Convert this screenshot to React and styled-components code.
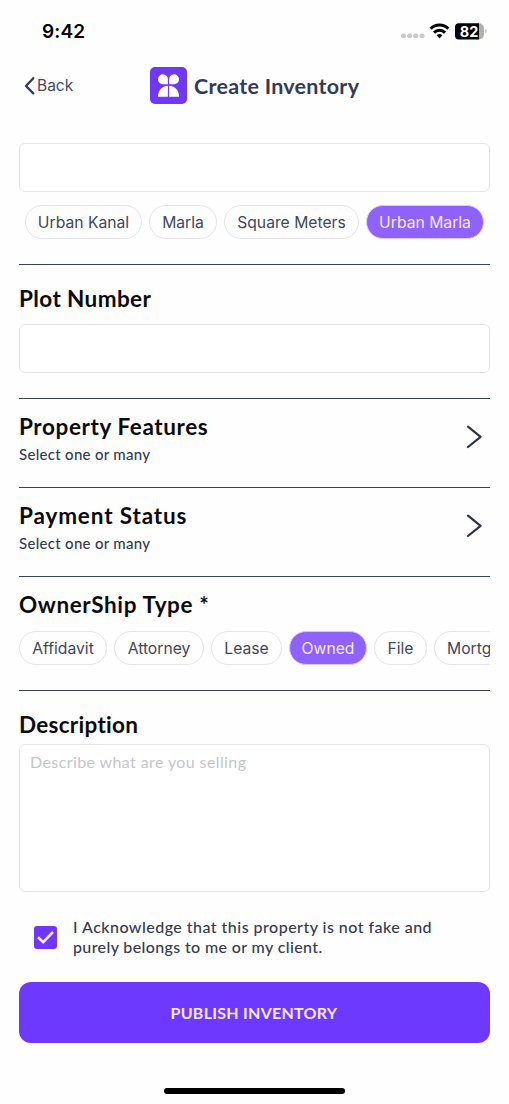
import React from "react";
import styled, { createGlobalStyle } from "styled-components";

const GlobalStyle = createGlobalStyle`
  * {
    box-sizing: border-box;
  }

  body {
    margin: 0;
    background: #fefefe;
    font-family: Lato, "Open Sans", sans-serif;
    color: #343b50;
  }
`;

const Screen = styled.div`
  display: flex;
  flex-direction: column;
  width: 509px;
  height: 1104px;
  overflow: hidden;
`;

const StatusBar = styled.div`
  display: flex;
  align-items: center;
  justify-content: space-between;
  height: 61px;
  padding: 0 21px 0 42px;
`;

const Clock = styled.div`
  padding-top: 2px;
  font: 600 19px/24px Inter, sans-serif;
  letter-spacing: 0.1px;
  color: #000;
`;

const StatusIcons = styled.div`
  display: flex;
  align-items: center;
`;

const Header = styled.header`
  display: flex;
  align-items: center;
  height: 49px;
  padding-left: 24px;
`;

const Back = styled.button`
  display: flex;
  align-items: center;
  gap: 2px;
  width: 126px;
  padding: 0;
  border: 0;
  background: none;
  font: 400 15.5px/20px Inter, sans-serif;
  color: #454b5e;
`;

const Title = styled.h1`
  margin: 0 0 0 7px;
  font-size: 21.5px;
  font-weight: 700;
  line-height: 28px;
  letter-spacing: 0.27px;
`;

const Form = styled.main`
  display: flex;
  flex-direction: column;
  padding: 33px 19px 0;
`;

const Section = styled.section`
  height: ${props => props.$height}px;
  padding-top: ${props => props.$top || 0}px;
  border-bottom: ${props => (props.$last ? "0" : "1px solid #3c4256")};
`;

const Input = styled.input`
  display: block;
  width: 471px;
  height: 49px;
  border: 1px solid #e5e4ed;
  border-radius: 6px;
  background: #fff;
`;

const Heading = styled.h2`
  margin: 0 0 ${props => props.$gap || 0}px;
  font-size: 22.5px;
  font-weight: 700;
  line-height: 28px;
  letter-spacing: ${props => props.$spacing}px;
  color: #0b0b0d;
  white-space: nowrap;
`;

const Hint = styled.div`
  margin-top: 3px;
  font-size: 15px;
  font-weight: 500;
  line-height: 20px;
  letter-spacing: 0.3px;
`;

const LinkRow = styled.div`
  display: flex;
  align-items: flex-start;
  justify-content: space-between;
  padding-right: 7px;
`;

const Chips = styled.div`
  display: flex;
  gap: 7px;
  overflow: hidden;
  margin-top: ${props => props.$top}px;
  padding-left: ${props => props.$inset || 0}px;
`;

const Chip = styled.button`
  flex: none;
  width: ${props => props.$width}px;
  height: 34px;
  padding: 1px 0 0 ${props => (props.$clipped ? "12px" : "0")};
  border: 1px solid ${props => (props.$active ? "#d9c9fd" : "#e6e5ed")};
  border-radius: 17px;
  background: ${props => (props.$active ? "#8f62fc" : "#fefefe")};
  font: 400 15.7px/31px Inter, sans-serif;
  text-align: ${props => (props.$clipped ? "left" : "center")};
  white-space: nowrap;
  color: ${props => (props.$active ? "#f6e9ff" : "#414759")};
`;

const TextArea = styled.textarea`
  display: block;
  width: 471px;
  height: 148px;
  padding: 7px 10px;
  border: 1px solid #e5e4ed;
  border-radius: 6px;
  background: #fff;
  resize: none;
  font: 400 16px/20px Lato, sans-serif;
  letter-spacing: 0.4px;

  &::placeholder {
    color: #c5c5c9;
  }
`;

const Agreement = styled.label`
  display: flex;
  align-items: center;
  gap: 16px;
  height: 40px;
  margin-top: 25px;
  padding-left: 15px;
  font-size: 16px;
  font-weight: 500;
  line-height: 20px;
  letter-spacing: 0.47px;
  white-space: nowrap;
`;

const SecondLine = styled.span`
  letter-spacing: 0.37px;
`;

const Checkbox = styled.span`
  display: flex;
  align-items: center;
  justify-content: center;
  width: 23px;
  height: 23px;
  border-radius: 3px;
  background: #6f38f8;
`;

const Publish = styled.button`
  height: 61px;
  margin-top: 25px;
  padding: 0 1px 0 0;
  border: 0;
  border-radius: 12px;
  background: #6e39ff;
  font: 700 16px/20px Lato, sans-serif;
  letter-spacing: 0.27px;
  color: #f5e6ff;
`;

const HomeIndicator = styled.div`
  flex: none;
  align-self: center;
  width: 181px;
  height: 6px;
  margin-top: 45px;
  border-radius: 3px;
  background: #000;
`;

const StatusGlyphs = () => (
  <svg width="88" height="20" viewBox="0 0 88 20">
    <g fill="#c8c8c8">
      <rect x="1" y="12.5" width="4.8" height="4.6" rx="1.8" />
      <rect x="7.2" y="12.5" width="4.8" height="4.6" rx="1.8" />
      <rect x="13.4" y="12.5" width="4.8" height="4.6" rx="1.8" />
      <rect x="19.6" y="12.5" width="4.8" height="4.6" rx="1.8" />
    </g>
    <g fill="none" stroke="#000" strokeWidth="3">
      <path d="M30.7 7.7a12.6 12.6 0 0 1 17.6 0" />
      <path d="M34 11.6a7.9 7.9 0 0 1 11 0" />
    </g>
    <path d="M36.6 14.2a4.6 4.6 0 0 1 5.8 0l-2.9 3.2z" fill="#000" />
    <path d="M78 2.2h1a5 5 0 0 1 5 5v6.2a5 5 0 0 1-5 5h-1z" fill="#b0b0b0" />
    <path d="M85.4 8c1.7.8 1.7 3.7 0 4.5z" fill="#b0b0b0" />
    <path d="M59 2.2h20v16.2H59a4 4 0 0 1-4-4V6.2a4 4 0 0 1 4-4z" fill="#000" />
    <text
      x="69"
      y="15.5"
      fill="#fff"
      fontFamily="Inter, sans-serif"
      fontSize="14.5"
      fontWeight="700"
      textAnchor="middle"
    >
      82
    </text>
  </svg>
);

const BackArrow = () => (
  <svg width="11" height="20" viewBox="0 0 11 20">
    <path
      d="M9.3 2.2 2 10l7.3 7.4"
      fill="none"
      stroke="#343b50"
      strokeWidth="2.3"
      strokeLinecap="round"
      strokeLinejoin="round"
    />
  </svg>
);

const Logo = () => (
  <svg width="37" height="37" viewBox="0 0 37 37">
    <rect width="37" height="37" rx="5" fill="#6f38f8" />
    <g fill="#fff">
      <path d="M17.9 12.3v4.9h-5a4.95 4.95 0 1 1 5-4.9z" />
      <path d="M19.1 12.3v4.9h5a4.95 4.95 0 1 0-5-4.9z" />
      <path d="M17.9 18.8v11H8c0-6.4 3.7-10.6 9.9-11z" />
      <path d="M19.1 18.8c6.2.4 9.9 4.6 9.9 11h-9.9z" />
    </g>
  </svg>
);

const Chevron = styled(({ className }) => (
  <svg className={className} width="18" height="26" viewBox="0 0 18 26">
    <path
      d="m3 2.7 12.6 10.1L3 23"
      fill="none"
      stroke="#2c3346"
      strokeWidth="2.2"
      strokeLinecap="round"
      strokeLinejoin="round"
    />
  </svg>
))`
  margin-top: 11px;
`;

const units = [
  { label: "Urban Kanal", width: 117 },
  { label: "Marla", width: 68 },
  { label: "Square Meters", width: 135 },
  { label: "Urban Marla", width: 118, active: true }
];

const owners = [
  { label: "Affidavit", width: 88 },
  { label: "Attorney", width: 90 },
  { label: "Lease", width: 71 },
  { label: "Owned", width: 78, active: true },
  { label: "File", width: 53 },
  { label: "Mortg", width: 70, clipped: true }
];

const ChipList = ({ items, top, inset }) => (
  <Chips $top={top} $inset={inset}>
    {items.map(item => (
      <Chip
        key={item.label}
        $width={item.width}
        $active={item.active}
        $clipped={item.clipped}
      >
        {item.label}
      </Chip>
    ))}
  </Chips>
);

const LinkSection = ({ title, spacing }) => (
  <Section $height={89} $top={14}>
    <LinkRow>
      <div>
        <Heading $spacing={spacing}>{title}</Heading>
        <Hint>Select one or many</Hint>
      </div>
      <Chevron />
    </LinkRow>
  </Section>
);

class App extends React.Component {
  render() {
    return (
      <Screen>
        <GlobalStyle />
        <StatusBar>
          <Clock>9:42</Clock>
          <StatusIcons>
            <StatusGlyphs />
          </StatusIcons>
        </StatusBar>
        <Header>
          <Back>
            <BackArrow />
            Back
          </Back>
          <Logo />
          <Title>Create Inventory</Title>
        </Header>
        <Form>
          <Section $height={122}>
            <Input />
            <ChipList items={units} top={13} inset={6} />
          </Section>
          <Section $height={134} $top={20}>
            <Heading $spacing={0.4} $gap={11}>
              Plot Number
            </Heading>
            <Input />
          </Section>
          <LinkSection title="Property Features" spacing={0.6} />
          <LinkSection title="Payment Status" spacing={0.87} />
          <Section $height={114} $top={14}>
            <Heading $spacing={0.6}>OwnerShip Type *</Heading>
            <ChipList items={owners} top={12} />
          </Section>
          <Section $height={201} $top={20} $last>
            <Heading $spacing={0.28} $gap={5}>
              Description
            </Heading>
            <TextArea placeholder="Describe what are you selling" />
          </Section>
          <Agreement>
            <Checkbox>
              <svg width="19" height="15" viewBox="0 0 19 15">
                <path
                  d="m2 7.2 5.2 5L17 2"
                  fill="none"
                  stroke="#f6e9ff"
                  strokeWidth="2.6"
                />
              </svg>
            </Checkbox>
            <span>
              I Acknowledge that this property is not fake and
              <br />
              <SecondLine>purely belongs to me or my client.</SecondLine>
            </span>
          </Agreement>
          <Publish>PUBLISH INVENTORY</Publish>
        </Form>
        <HomeIndicator />
      </Screen>
    );
  }
}

export default App;
